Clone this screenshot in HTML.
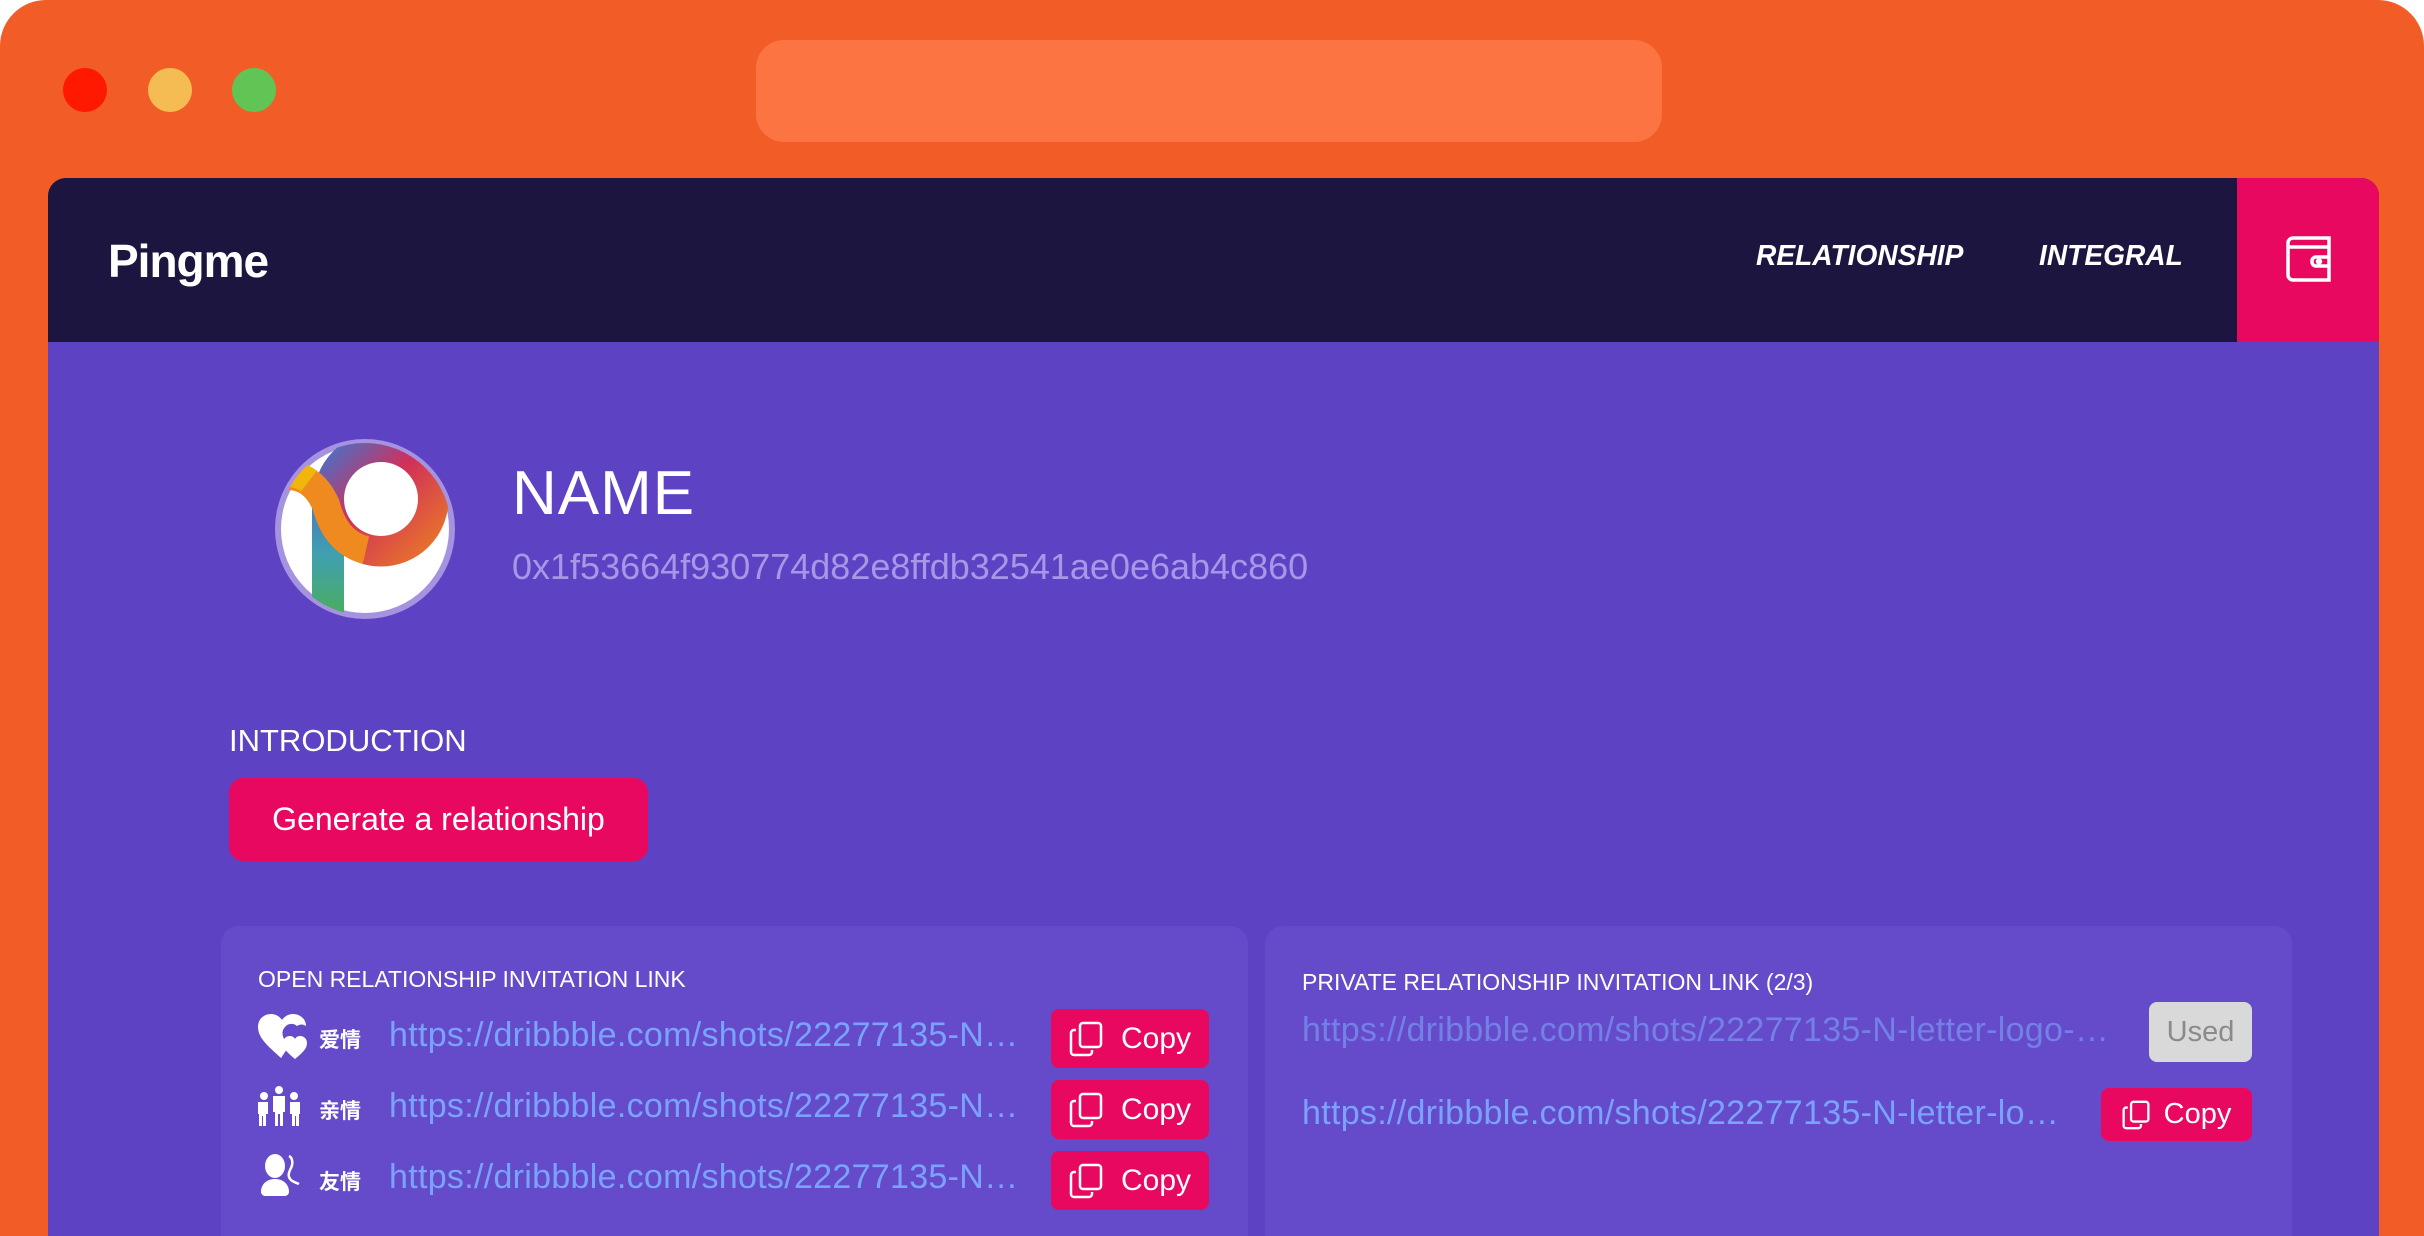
<!DOCTYPE html>
<html><head><meta charset="utf-8"><style>
*{margin:0;padding:0;box-sizing:border-box}
body{width:2424px;height:1236px;background:#fff;overflow:hidden;font-family:"Liberation Sans","Noto Sans CJK SC",sans-serif;position:relative}
.frame{position:absolute;left:0;top:0;width:2424px;height:1236px;background:#f25d27;border-radius:46px 46px 0 0}
.dot{position:absolute;top:68px;width:44px;height:44px;border-radius:50%}
.addr{position:absolute;left:756px;top:40px;width:906px;height:102px;background:#fc7442;border-radius:28px}
.win{position:absolute;left:48px;top:178px;width:2331px;height:1058px;background:#5d43c4;border-radius:18px 18px 0 0;overflow:hidden}
.nav{position:absolute;left:0;top:0;width:2331px;height:164px;background:#1c1540}
.logo{position:absolute;left:60px;top:56px;color:#fff;font-size:46px;font-weight:bold;letter-spacing:-1px}
.nl{position:absolute;top:62px;color:#fff;font-size:29px;font-weight:bold;font-style:italic;transform:scaleX(.97);transform-origin:left}
.wal{position:absolute;left:2189px;top:0;width:142px;height:164px;background:#e9085f}
.abs{position:absolute}
.card{position:absolute;top:748px;width:1027px;height:330px;background:#654bc9;border-radius:18px}
.ct{position:absolute;color:#fff;font-size:23px}
.url{position:absolute;color:#7aa3ff;font-size:34px;white-space:nowrap;overflow:hidden;text-overflow:ellipsis;letter-spacing:.3px}
.btn{position:absolute;background:#e9085f;border-radius:8px;color:#fff;font-size:30px;display:flex;align-items:center;justify-content:center;gap:18px}
.cn{position:absolute;color:#fff;font-size:21px;font-weight:bold}
</style></head><body>
<div class="frame"></div>
<div class="dot" style="left:63px;background:#ff1900"></div>
<div class="dot" style="left:148px;background:#f4bc53"></div>
<div class="dot" style="left:232px;background:#60c554"></div>
<div class="addr"></div>
<div class="win">
 <div class="nav">
  <div class="logo">Pingme</div>
  <div class="nl" style="left:1708px">RELATIONSHIP</div>
  <div class="nl" style="left:1991px">INTEGRAL</div>
  <div class="wal"><svg class="abs" style="left:48px;top:56px" width="48" height="50" viewBox="0 0 48 50" fill="none" stroke="#fff" stroke-width="3.5"><path d="M44 4H8a5 5 0 0 0-5 5v32a5 5 0 0 0 5 5h36z"/><path d="M3 13h41"/><path d="M44 23H31a4 4 0 0 0-4 4v1a4 4 0 0 0 4 4h13"/><circle cx="34" cy="27.5" r="1.5" fill="#fff"/></svg></div>
 </div>
 <svg class="abs" style="left:223px;top:257px" width="188" height="188" viewBox="0 0 188 188">
  <defs>
   <clipPath id="c"><circle cx="94" cy="94" r="86"/></clipPath>
   <linearGradient id="b" x1="0" y1="0" x2="0" y2="1"><stop offset="0" stop-color="#4a6fc7"/><stop offset=".5" stop-color="#3fa0b0"/><stop offset="1" stop-color="#4caf50"/></linearGradient>
   <linearGradient id="r" x1="0" y1="0" x2="1" y2="1"><stop offset="0" stop-color="#4a6fc7"/><stop offset=".45" stop-color="#d0305a"/><stop offset="1" stop-color="#e8742a"/></linearGradient>
  </defs>
  <circle cx="94" cy="94" r="90" fill="#a693e0"/>
  <circle cx="94" cy="94" r="84" fill="#fff"/>
  <g clip-path="url(#c)">
   <rect x="41" y="50" width="32" height="140" fill="url(#b)"/>
   <circle cx="110" cy="64" r="52" fill="none" stroke="url(#r)" stroke-width="31"/>
   <path d="M8 42 Q40 36 55 70 Q65 108 95 115" fill="none" stroke="#ef8a20" stroke-width="28"/>
   <path d="M5 40 Q25 36 38 46" fill="none" stroke="#f2b50c" stroke-width="26"/>
   <circle cx="110" cy="64" r="37" fill="#fff"/>
  </g>
 </svg>
 <div class="abs" style="left:464px;top:280px;color:#fff;font-size:62px;letter-spacing:1px">NAME</div>
 <div class="abs" style="left:464px;top:368px;color:#a797e6;font-size:36px">0x1f53664f930774d82e8ffdb32541ae0e6ab4c860</div>
 <div class="abs" style="left:181px;top:545px;color:#fff;font-size:31px">INTRODUCTION</div>
 <div class="abs" style="left:181px;top:600px;width:419px;height:83px;background:#e9085f;border-radius:14px;color:#fff;font-size:32px;display:flex;align-items:center;justify-content:center">Generate a relationship</div>

 <div class="card" style="left:173px">
  <div class="ct" style="left:37px;top:40px">OPEN RELATIONSHIP INVITATION LINK</div>
  <svg class="abs" style="left:37px;top:88px" width="50" height="46" viewBox="0 0 50 46" fill="#fff"><path d="M23 44C10 32 0 24 0 13 0 5 6 0 13 0c5 0 9 3 11 6 2-3 6-6 11-6 7 0 13 5 13 12-3-2-6-2-9 0-3-3-9-3-12 1-4 4-3 10 1 15l3 4z"/><path d="M37 45c-7-6-12-10-12-16 0-4 3-7 7-7 2 0 4 1 5 3 1-2 3-3 5-3 4 0 7 3 7 7 0 6-5 10-12 16z"/></svg>
  <div class="cn" style="left:98px;top:98px">爱情</div>
  <div class="url" style="left:168px;top:90px;width:640px">https://dribbble.com/shots/22277135-N-letter-logo-design</div>
  <svg class="abs" style="left:37px;top:160px" width="42" height="40" viewBox="0 0 42 40" fill="#fff"><circle cx="21" cy="4" r="4"/><circle cx="6" cy="10" r="4"/><circle cx="36" cy="10" r="4"/><path d="M15 10h12v16h-2v14h-3V28h-2v12h-3V26h-2z"/><path d="M0 16h10v12H8v12H5V30H4v10H1V28H0z"/><path d="M32 16h10v12h-1v12h-3V30h-1v10h-3V28h-2z"/></svg>
  <div class="cn" style="left:98px;top:169px">亲情</div>
  <div class="url" style="left:168px;top:161px;width:640px">https://dribbble.com/shots/22277135-N-letter-logo-design</div>
  <svg class="abs" style="left:40px;top:228px" width="44" height="42" viewBox="0 0 44 42" fill="#fff"><ellipse cx="14" cy="12" rx="10" ry="12"/><path d="M0 38c0-8 6-13 14-13s14 5 14 13c0 2-2 4-4 4H4c-2 0-4-2-4-4z"/><path d="M28 2c4 2 4 8 2 12-2 4-4 8 0 12 2 2 6 3 8 4" fill="none" stroke="#fff" stroke-width="2.5"/></svg>
  <div class="cn" style="left:98px;top:240px">友情</div>
  <div class="url" style="left:168px;top:232px;width:640px">https://dribbble.com/shots/22277135-N-letter-logo-design</div>
 </div>
 <div class="card" style="left:1217px">
  <div class="ct" style="left:37px;top:43px">PRIVATE RELATIONSHIP INVITATION LINK (2/3)</div>
  <div class="url" style="left:37px;top:85px;width:819px;color:#7380e6">https://dribbble.com/shots/22277135-N-letter-logo-design</div>
  <div class="abs" style="left:884px;top:76px;width:103px;height:60px;background:#d9d9d9;border-radius:8px;color:#8a8a8a;font-size:29px;display:flex;align-items:center;justify-content:center">Used</div>
  <div class="url" style="left:37px;top:168px;width:769px">https://dribbble.com/shots/22277135-N-letter-logo-design</div>
 </div>
</div>
<div class="btn" style="left:1051px;top:1009px;width:158px;height:59px"><svg width="34" height="36" viewBox="0 0 34 36" fill="none" stroke="#fff" stroke-width="2.5"><rect x="11" y="2" width="21" height="24" rx="3"/><path d="M7 9H5a3 3 0 0 0-3 3v19a3 3 0 0 0 3 3h15a3 3 0 0 0 3-3v-2"/></svg>Copy</div>
<div class="btn" style="left:1051px;top:1080px;width:158px;height:59px"><svg width="34" height="36" viewBox="0 0 34 36" fill="none" stroke="#fff" stroke-width="2.5"><rect x="11" y="2" width="21" height="24" rx="3"/><path d="M7 9H5a3 3 0 0 0-3 3v19a3 3 0 0 0 3 3h15a3 3 0 0 0 3-3v-2"/></svg>Copy</div>
<div class="btn" style="left:1051px;top:1151px;width:158px;height:59px"><svg width="34" height="36" viewBox="0 0 34 36" fill="none" stroke="#fff" stroke-width="2.5"><rect x="11" y="2" width="21" height="24" rx="3"/><path d="M7 9H5a3 3 0 0 0-3 3v19a3 3 0 0 0 3 3h15a3 3 0 0 0 3-3v-2"/></svg>Copy</div>
<div class="btn" style="left:2101px;top:1088px;width:151px;height:53px;font-size:29px;gap:14px"><svg width="28" height="30" viewBox="0 0 34 36" fill="none" stroke="#fff" stroke-width="2.8"><rect x="11" y="2" width="21" height="24" rx="3"/><path d="M7 9H5a3 3 0 0 0-3 3v19a3 3 0 0 0 3 3h15a3 3 0 0 0 3-3v-2"/></svg>Copy</div>
</body></html>
